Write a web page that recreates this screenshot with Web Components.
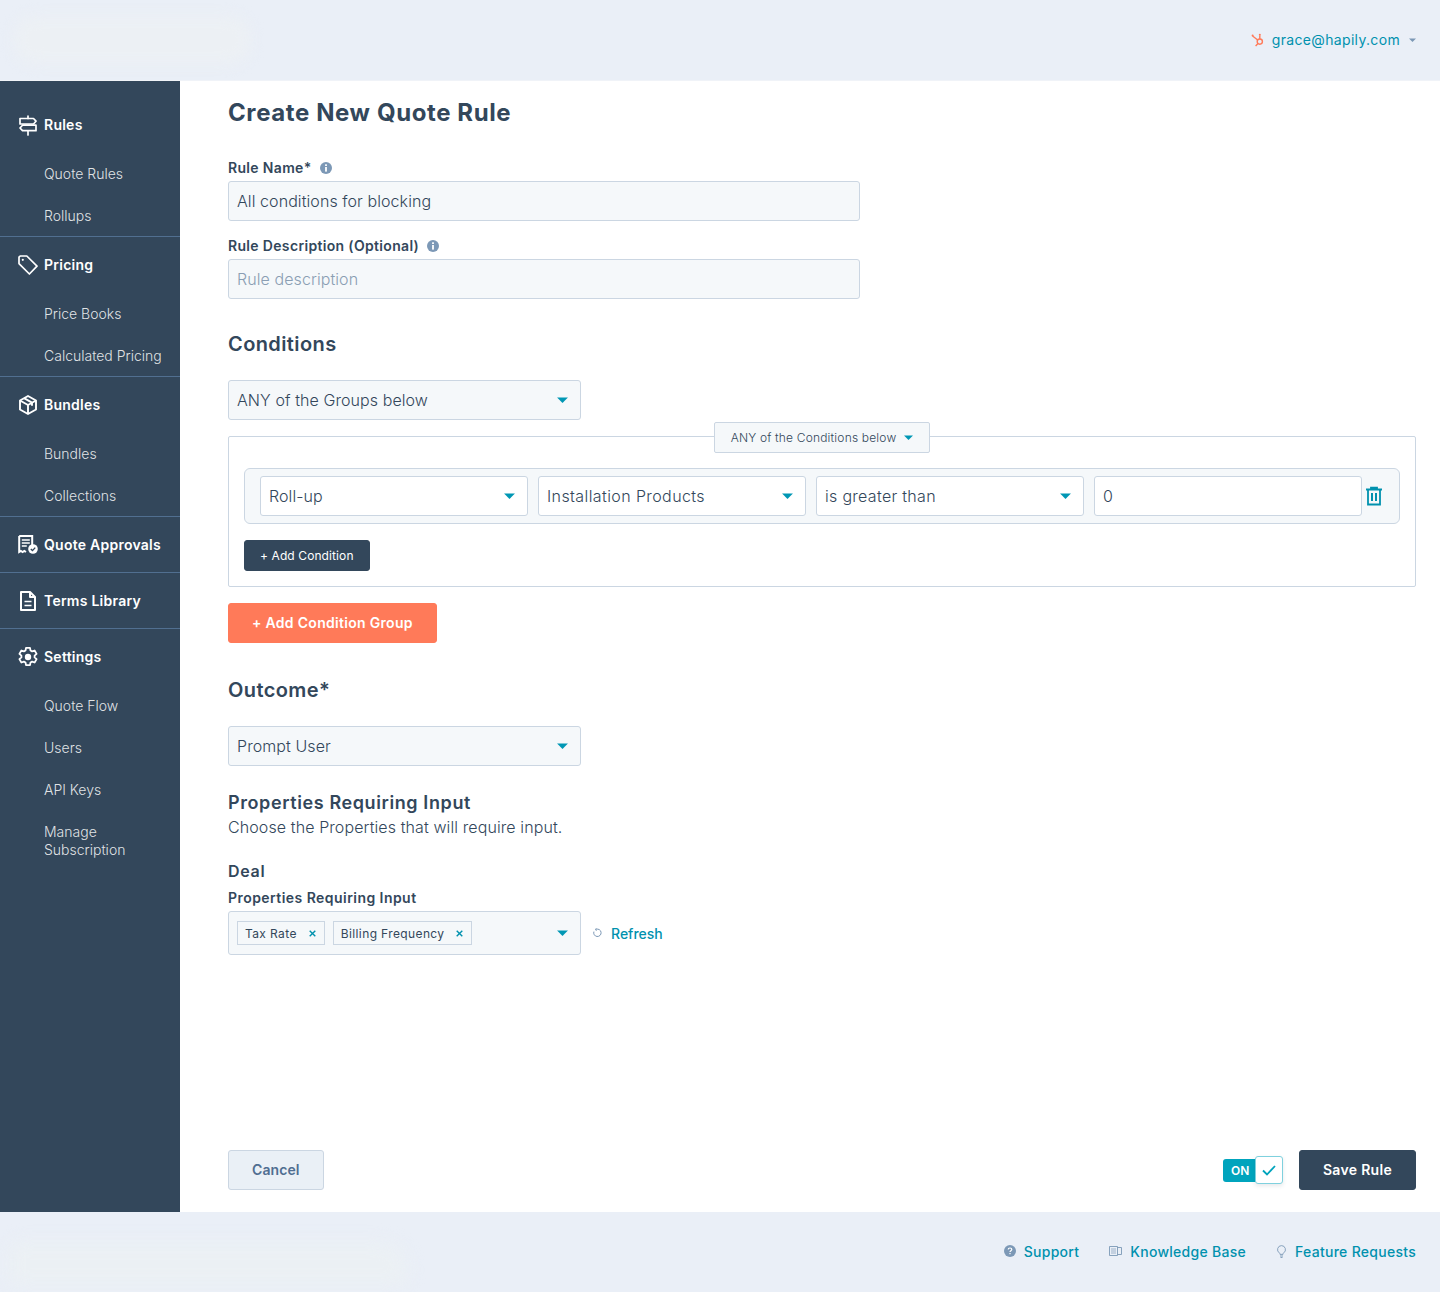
<!DOCTYPE html>
<html lang="en">
<head>
<meta charset="utf-8">
<title>Create New Quote Rule</title>
<style>
  html, body { margin: 0; padding: 0; background: #fff; }
  body { font-family: Inter, "Noto Sans", sans-serif; color: #33475b; width: 1440px; height: 1292px; overflow: hidden; }
</style>
</head>
<body>
<quote-app>
  <top-bar slot="top"></top-bar>
  <side-nav slot="side">
    <nav-group label="Rules" icon="rules" first>
      <nav-link>Quote Rules</nav-link>
      <nav-link>Rollups</nav-link>
    </nav-group>
    <nav-group label="Pricing" icon="tag">
      <nav-link>Price Books</nav-link>
      <nav-link>Calculated Pricing</nav-link>
    </nav-group>
    <nav-group label="Bundles" icon="box">
      <nav-link>Bundles</nav-link>
      <nav-link>Collections</nav-link>
    </nav-group>
    <nav-group label="Quote Approvals" icon="approve"></nav-group>
    <nav-group label="Terms Library" icon="doc"></nav-group>
    <nav-group label="Settings" icon="gear" last>
      <nav-link>Quote Flow</nav-link>
      <nav-link>Users</nav-link>
      <nav-link>API Keys</nav-link>
      <nav-link>Manage Subscription</nav-link>
    </nav-group>
  </side-nav>
  <rule-form slot="main"></rule-form>
  <bottom-bar slot="bottom"></bottom-bar>
</quote-app>

<script>
const ICONS = {
  rules: '<svg width="18" height="21" viewBox="0 0 18 21" fill="none" stroke="#fff" stroke-width="1.700" stroke-linejoin="round" stroke-linecap="round"><path d="M9 1v2.500M9 16v4"/><path d="M1 3.500h13.500L17 6.200 14.500 9H1z"/><path d="M17 10.200H3.500L1 13l2.500 2.700H17z"/></svg>',
  tag: '<svg width="20" height="20" viewBox="0 0 20 20" fill="none" stroke="#fff" stroke-width="1.700" stroke-linejoin="round"><path d="M1 2.200 2.200 1h6.600l10.200 10.200-7.600 7.800L1 8.600z"/><circle cx="4.800" cy="4.800" r="1.100" fill="#fff" stroke="none"/></svg>',
  box: '<svg width="18" height="20" viewBox="0 0 18 20" fill="none" stroke="#fff" stroke-width="1.900" stroke-linejoin="round"><path d="M9 1 17 5.500v9L9 19l-8-4.500v-9z"/><path d="M1 5.500 9 10l8-4.500M9 10v9M5 3.200l8 4.500v3"/></svg>',
  approve: '<svg width="20" height="19" viewBox="0 0 20 19"><path d="M1.200 1h13v9M1.200 1v16l1.700-1 1.700 1 1.700-1 1.700 1" fill="none" stroke="#fff" stroke-width="2"/><path d="M3.800 5h8M3.800 8h8M3.800 11h5" stroke="#fff" stroke-width="1.600"/><circle cx="15" cy="14" r="4.800" fill="#fff"/><path d="M12.800 14l1.700 1.600 2.700-3" fill="none" stroke="#33475b" stroke-width="1.400"/></svg>',
  doc: '<svg width="16" height="20" viewBox="0 0 16 20" fill="none" stroke="#fff" stroke-width="2" stroke-linejoin="round"><path d="M1 1h9l5 5v13H1z"/><path d="M10 1v5h5"/><path d="M4.500 10.500h7M4.500 14.500h7" stroke-width="1.700"/></svg>',
  gear: '<svg width="20" height="20" viewBox="0 0 20 20" fill="none" stroke="#fff" stroke-width="1.800" stroke-linejoin="round"><path d="M8 .9h4l.5 2.600 1.600.9 2.500-.9 2 3.400-2 1.700v1.800l2 1.700-2 3.400-2.500-.9-1.600.9-.5 2.600H8l-.5-2.600-1.600-.9-2.500.9-2-3.400 2-1.700V8.600l-2-1.700 2-3.400 2.500.9 1.600-.9z"/><circle cx="10" cy="10" r="3.200" fill="#fff" stroke="none"/></svg>'
};

const caret = (c, w) => `<svg width="${w}" height="${w / 2 + 1}" viewBox="0 0 10 6"><path d="M0 .5h10L5 5.500z" fill="${c}"/></svg>`;

function shell(el, html) {
  el.attachShadow({ mode: 'open' }).innerHTML = html;
}

class QuoteApp extends HTMLElement {
  constructor() {
    super();
    shell(this, `<style>
      :host { display: grid; grid-template: 81px 1131px 80px / 180px 1fr; width: 1440px; height: 1292px; }
      .top, .bottom { grid-column: 1 / 3; display: block; }
    </style>
    <div class="top"><slot name="top"></slot></div>
    <slot name="side"></slot>
    <slot name="main"></slot>
    <div class="bottom"><slot name="bottom"></slot></div>`);
  }
}

class TopBar extends HTMLElement {
  constructor() {
    super();
    shell(this, `<style>
      :host { display: flex; height: 81px; box-sizing: border-box; background: #eaeff7; border-bottom: 1px solid #f0f3f8; align-items: center; justify-content: flex-end; padding: 0 24px 0 0; position: relative; overflow: hidden; font-size: 14px; color: #0091ae; }
      .smudge { position: absolute; left: 14px; top: 16px; width: 236px; height: 48px; background: #ecf0f4; filter: blur(7px); border-radius: 22px; }
      .sprocket { margin-right: 7px; }
      .mail { font-weight: 400; margin: 0 9px 2px 0; letter-spacing: .33px; }
      svg { display: block; }
    </style>
    <div class="smudge"></div>
    <svg class="sprocket" width="14" height="14" viewBox="0 0 14 14" fill="none" stroke="#ff7a59" stroke-width="1.400"><circle cx="8.800" cy="8.600" r="2.600"/><path d="M8.800 6V2.600M6.700 7 1.600 3M7 10.600l-2.400 2.400"/><circle cx="1.600" cy="2.600" r="1" fill="#ff7a59" stroke="none"/><circle cx="8.800" cy="1.800" r="1" fill="#ff7a59" stroke="none"/></svg>
    <span class="mail">grace@hapily.com</span>
    ${caret('#7c98b6', 7)}`);
  }
}

class SideNav extends HTMLElement {
  constructor() {
    super();
    shell(this, `<style>
      :host { display: block; background: #33475b; color: #fff; font-size: 14px; }
    </style><slot></slot>`);
  }
}

class NavGroup extends HTMLElement {
  constructor() {
    super();
    const label = this.getAttribute('label');
    const icon = ICONS[this.getAttribute('icon')];
    const hasLinks = this.children.length > 0;
    shell(this, `<style>
      :host { display: block; border-bottom: 1px solid #516f90; }
      :host([first]) { padding-top: 16px; }
      :host([last]) { border-bottom: 0; }
      .head { display: flex; box-sizing: border-box; height: ${hasLinks ? 56 : 55}px; padding: 0 0 1px 44px; align-items: center; font-weight: 600; letter-spacing: .25px; position: relative; }
      .ico { position: absolute; left: 0; top: 0; bottom: 0; width: 56px; display: flex; align-items: center; justify-content: center; }
      .ico svg { display: block; }
      .links { display: block; margin-bottom: ${hasLinks ? -1 : 0}px; }
    </style>
    <div class="head"><span class="ico">${icon}</span><span>${label}</span></div>
    <div class="links"><slot></slot></div>`);
  }
}

class NavLink extends HTMLElement {
  constructor() {
    super();
    shell(this, `<style>
      :host { display: block; padding: 12px 10px 12px 44px; line-height: 18px; font-weight: 300; font-size: 14px; color: rgba(255,255,255,.86); }
    </style><slot></slot>`);
  }
}

class FieldBox extends HTMLElement {
  constructor() {
    super();
    shell(this, `<style>
      :host { display: flex; box-sizing: border-box; height: 40px; align-items: center; padding: 0 8px; background: #f5f8fa; border: 1px solid #cbd6e2; border-radius: 3px; font-size: 16px; font-weight: 300; letter-spacing: .08px; color: #33475b; white-space: nowrap; }
      :host([white]) { background: #fff; }
      :host([placeholder]) { color: #8a9eb3; }
      .v { flex: 1; }
      svg { display: block; margin-right: 4px; }
    </style>
    <span class="v"><slot></slot></span>
    ${this.hasAttribute('select') ? caret('#0097b4', 11) : ''}`);
  }
}

class FieldLabel extends HTMLElement {
  constructor() {
    super();
    shell(this, `<style>
      :host { display: flex; align-items: center; gap: 8px; font-size: 14px; font-weight: 600; letter-spacing: .33px; line-height: 18px; color: #33475b; }
      svg { display: block; }
    </style>
    <span><slot></slot></span>
    ${this.hasAttribute('info') ? `<svg width="12" height="12" viewBox="0 0 12 12"><circle cx="6" cy="6" r="6" fill="#7c98b6"/><rect x="5.100" y="2.300" width="1.800" height="1.700" fill="#fff"/><rect x="5.100" y="5" width="1.800" height="4.600" fill="#fff"/></svg>` : ''}`);
  }
}

class TagChip extends HTMLElement {
  constructor() {
    super();
    shell(this, `<style>
      :host { display: flex; box-sizing: border-box; height: 24px; align-items: center; padding: 0 8px 0 7px; gap: 12px; background: #f5f8fa; border: 1px solid #cbd6e2; font-size: 12px; font-weight: 400; letter-spacing: .38px; color: #33475b; white-space: nowrap; }
      svg { display: block; }
    </style>
    <span><slot></slot></span>
    <svg width="7" height="7" viewBox="0 0 7 7" stroke="#0091ae" stroke-width="1.400"><path d="M.7.7l5.600 5.600M6.300.7.7 6.300"/></svg>`);
  }
}

class ActionButton extends HTMLElement {
  constructor() {
    super();
    shell(this, `<style>
      :host { display: inline-flex; box-sizing: border-box; height: 40px; align-items: center; justify-content: center; padding: 0 23px 2px; border-radius: 3px; font-size: 14px; font-weight: 600; letter-spacing: .3px; white-space: nowrap; background: #33475b; color: #fff; border: 1px solid #33475b; }
      :host([kind="orange"]) { background: #ff7a59; border-color: #ff7a59; }
      :host([kind="light"]) { background: #eaf0f6; border-color: #cbd6e2; color: #506e91; letter-spacing: .1px; }
      :host([kind="small"]) { height: 31px; padding: 0 15px; font-size: 12px; font-weight: 400; letter-spacing: .1px; }
    </style><slot></slot>`);
  }
}

class ConditionGroup extends HTMLElement {
  constructor() {
    super();
    shell(this, `<style>
      :host { display: block; position: relative; box-sizing: border-box; width: 1188px; height: 151px; border: 1px solid #cbd6e2; border-radius: 2px; padding: 31px 15px 0; }
      .pill { position: absolute; left: 485px; top: -15px; box-sizing: border-box; width: 216px; height: 31px; display: flex; align-items: center; justify-content: center; gap: 8px; background: #f5f8fa; border: 1px solid #cbd6e2; border-radius: 2px; font-size: 12px; font-weight: 300; letter-spacing: .18px; color: #33475b; }
      .pill svg { display: block; }
      .row { box-sizing: border-box; height: 56px; background: #f5f8fa; border: 1px solid #cbd6e2; border-radius: 6px; display: grid; grid-template-columns: repeat(4, 268px) 1fr; gap: 10px; padding: 7px 0 7px 15px; align-items: center; }
      .trash { display: block; margin-left: -7px; }
      .add { margin-top: 16px; }
    </style>
    <div class="pill"><span>ANY of the Conditions below</span>${caret('#0097b4', 9)}</div>
    <div class="row">
      <field-box select white>Roll-up</field-box>
      <field-box select white style="letter-spacing:.4px">Installation Products</field-box>
      <field-box select white style="letter-spacing:.3px">is greater than</field-box>
      <field-box white>0</field-box>
      <svg class="trash" width="18" height="20" viewBox="0 0 18 20" fill="none" stroke="#0091ae" stroke-width="1.800"><path d="M1 3.500h16M6 3.500V1.600h6v1.900M3 3.500v15h12v-15"/><path d="M7 7v8M11 7v8" stroke-width="2"/></svg>
    </div>
    <div class="add"><action-button kind="small">+ Add Condition</action-button></div>`);
  }
}

class ToggleSwitch extends HTMLElement {
  constructor() {
    super();
    shell(this, `<style>
      :host { display: flex; align-items: center; width: 60px; height: 28px; position: relative; }
      .on { box-sizing: border-box; width: 34px; height: 23px; background: #00a4bd; border-radius: 3px 0 0 3px; color: #fff; font-size: 12px; font-weight: 600; display: flex; align-items: center; padding-left: 8px; }
      .knob { position: absolute; left: 32px; top: 0; box-sizing: border-box; width: 28px; height: 28px; background: #fff; border: 1px solid #7fd1de; border-radius: 3px; display: flex; align-items: center; justify-content: center; box-shadow: 0 2px 4px rgba(51,71,91,.12); }
    </style>
    <div class="on">ON</div>
    <div class="knob"><svg width="14" height="11" viewBox="0 0 14 11" fill="none" stroke="#00a4bd" stroke-width="1.800"><path d="M1 5.500l4 4 8-8.500"/></svg></div>`);
  }
}

class RuleForm extends HTMLElement {
  constructor() {
    super();
    shell(this, `<style>
      :host { display: flex; flex-direction: column; padding: 0 24px 22px 48px; color: #33475b; }
      h1 { margin: 16px 0 0; font-size: 24px; line-height: 32px; font-weight: 700; letter-spacing: .6px; }
      h2 { margin: 0; font-size: 20px; line-height: 26px; font-weight: 600; letter-spacing: .4px; }
      h3 { margin: 0; font-size: 18px; line-height: 24px; font-weight: 600; letter-spacing: .6px; }
      h4 { margin: 0; font-size: 16px; line-height: 22px; font-weight: 600; letter-spacing: .7px; }
      p { margin: 0; font-size: 16px; line-height: 24px; font-weight: 300; letter-spacing: .1px; }
      .w632 { width: 632px; }
      .w353 { width: 353px; }
      .lab { margin-bottom: 4px; }
      .multi { box-sizing: border-box; width: 353px; height: 44px; display: flex; align-items: center; gap: 8px; padding: 0 8px; background: #f5f8fa; border: 1px solid #cbd6e2; border-radius: 3px; }
      .multi svg { display: block; margin: 0 4px 0 auto; }
      .multi-row { display: flex; align-items: center; }
      .refresh { display: flex; align-items: center; gap: 9px; margin: 0 0 0 12px; color: #0091ae; font-size: 14px; font-weight: 500; }
      .refresh svg { display: block; }
      .foot { margin-top: auto; display: flex; align-items: center; }
      .foot .sp { flex: 1; }
      .foot toggle-switch { margin-right: 16px; }
    </style>
    <h1>Create New Quote Rule</h1>
    <field-label info class="lab" style="margin-top:30px">Rule Name*</field-label>
    <field-box class="w632">All conditions for blocking</field-box>
    <field-label info class="lab" style="margin-top:16px">Rule Description (Optional)</field-label>
    <field-box class="w632" placeholder>Rule description</field-box>
    <h2 style="margin-top:32px">Conditions</h2>
    <field-box class="w353" select style="margin-top:23px">ANY of the Groups below</field-box>
    <condition-group style="margin-top:16px"></condition-group>
    <div style="margin-top:16px"><action-button kind="orange">+ Add Condition Group</action-button></div>
    <h2 style="margin-top:34px">Outcome*</h2>
    <field-box class="w353" select style="margin-top:23px">Prompt User</field-box>
    <h3 style="margin-top:25px">Properties Requiring Input</h3>
    <p>Choose the Properties that will require input.</p>
    <h4 style="margin-top:21px">Deal</h4>
    <field-label class="lab" style="margin-top:7px;letter-spacing:.45px">Properties Requiring Input</field-label>
    <div class="multi-row">
      <div class="multi">
        <tag-chip>Tax Rate</tag-chip>
        <tag-chip>Billing Frequency</tag-chip>
        ${caret('#0097b4', 11)}
      </div>
      <div class="refresh">
        <svg width="9" height="10" viewBox="0 0 9 10" fill="none" stroke="#7c98b6" stroke-width="1"><path d="M3.200 1.300a3.700 3.700 0 1 1-2.300 2.300"/><path d="M3.700 .2 2.100 1.500l1.700 1" stroke-width=".9"/></svg>
        <span>Refresh</span>
      </div>
    </div>
    <div class="foot">
      <action-button kind="light">Cancel</action-button>
      <span class="sp"></span>
      <toggle-switch></toggle-switch>
      <action-button>Save Rule</action-button>
    </div>`);
  }
}

class BottomBar extends HTMLElement {
  constructor() {
    super();
    shell(this, `<style>
      :host { display: flex; height: 80px; box-sizing: border-box; background: #eaeff7; align-items: center; justify-content: flex-end; gap: 30px; padding: 0 24px 2px 0; position: relative; overflow: hidden; font-size: 14px; font-weight: 500; letter-spacing: .28px; color: #0091ae; }
      .smudge { position: absolute; left: 8px; top: 30px; width: 400px; height: 44px; background: #ebf0f4; filter: blur(8px); border-radius: 24px 60px 30px 24px; }
      a { display: flex; align-items: center; gap: 8px; color: inherit; text-decoration: none; }
      svg { display: block; }
    </style>
    <div class="smudge"></div>
    <a><svg width="12" height="12" viewBox="0 0 12 12"><circle cx="6" cy="6" r="6" fill="#7c98b6"/><path d="M4.200 4.600C4.200 3.600 5 3 6 3s1.800.6 1.800 1.500C7.800 5.700 6 5.600 6 7" fill="none" stroke="#fff" stroke-width="1.200"/><rect x="5.400" y="8" width="1.200" height="1.200" fill="#fff"/></svg>Support</a>
    <a><svg width="13" height="10" viewBox="0 0 13 10" fill="none" stroke="#7c98b6" stroke-width=".9"><path d="M.5.5h8v9h-8zM8.500 1.500h4v7h-4"/><path d="M2 3h5M2 5h5M2 7h5" stroke-width=".7"/></svg>Knowledge Base</a>
    <a><svg width="11" height="13" viewBox="0 0 11 13" fill="none" stroke="#7c98b6" stroke-width=".9"><path d="M5.500.6a4 4 0 0 0-2.200 7.300c.5.4.7.9.7 1.500h3c0-.6.2-1.100.7-1.500A4 4 0 0 0 5.500.6z"/><path d="M4 11h3M4.500 12.500h2"/></svg>Feature Requests</a>`);
  }
}

customElements.define('quote-app', QuoteApp);
customElements.define('top-bar', TopBar);
customElements.define('side-nav', SideNav);
customElements.define('nav-group', NavGroup);
customElements.define('nav-link', NavLink);
customElements.define('field-box', FieldBox);
customElements.define('field-label', FieldLabel);
customElements.define('tag-chip', TagChip);
customElements.define('action-button', ActionButton);
customElements.define('condition-group', ConditionGroup);
customElements.define('toggle-switch', ToggleSwitch);
customElements.define('rule-form', RuleForm);
customElements.define('bottom-bar', BottomBar);
</script>
</body>
</html>
